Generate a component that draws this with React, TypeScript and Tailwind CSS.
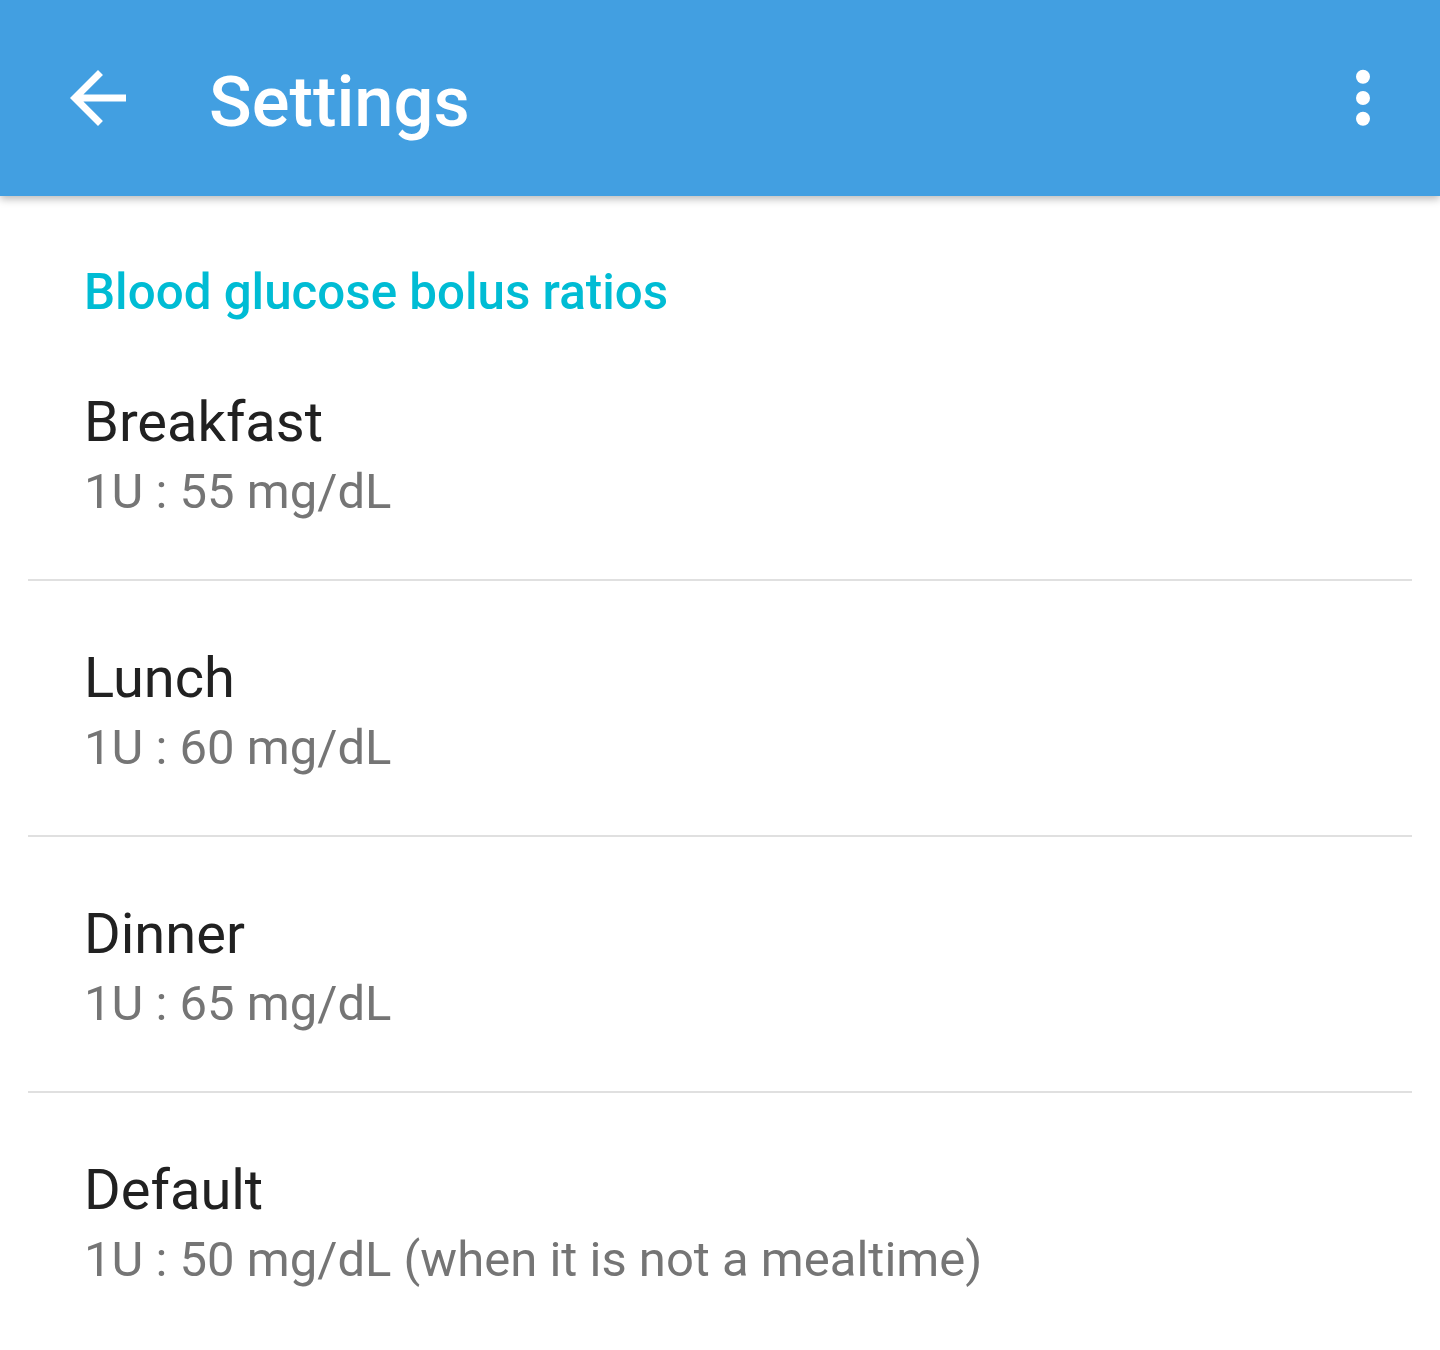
import React from "react";

const items = [
  { title: "Breakfast", sub: "1U : 55 mg/dL" },
  { title: "Lunch", sub: "1U : 60 mg/dL" },
  { title: "Dinner", sub: "1U : 65 mg/dL" },
  { title: "Default", sub: "1U : 50 mg/dL (when it is not a mealtime)" },
];

export default function App() {
  return (
    <div
      className="w-[1440px] h-[1350px] bg-white overflow-hidden"
      style={{ fontFamily: "Roboto, 'Noto Sans', sans-serif" }}
    >
      <header className="relative z-10 flex h-[196px] items-start bg-[#429FE1] shadow-[0_3px_8px_rgba(0,0,0,0.28)]">
        <svg
          className="ml-[56px] mt-[56px] shrink-0"
          width="84"
          height="84"
          viewBox="0 0 24 24"
          fill="white"
        >
          <path d="M20 11H7.83l5.59-5.59L12 4l-8 8 8 8 1.41-1.41L7.83 13H20v-2z" />
        </svg>
        <div className="ml-[69px] pt-[67px] text-[70.5px] leading-[70px] font-medium text-white">
          Settings
        </div>
        <div className="flex-1" />
        <svg
          className="mr-[67px] mt-[68px] shrink-0"
          width="20"
          height="60"
          viewBox="0 0 20 60"
          fill="white"
        >
          <circle cx="10" cy="8.7" r="7" />
          <circle cx="10" cy="30" r="7" />
          <circle cx="10" cy="50.7" r="7" />
        </svg>
      </header>

      <div className="pt-[68px] pb-[5px] pl-[84px]">
        <div className="text-[49.3px] leading-[56px] font-medium text-[#00BCD4]">
          Blood glucose bolus ratios
        </div>
      </div>

      <div className="flex flex-col">
        {items.map((it, i) => (
          <div
            key={it.title}
            className={
              i < items.length - 1
                ? "mx-[28px] border-b-2 border-[#E0E0E0] pl-[56px] pt-[65px] pb-[59px]"
                : "mx-[28px] pl-[56px] pt-[65px] pb-[59px]"
            }
          >
            <div className="text-[56px] leading-[64px] text-[#212121]">{it.title}</div>
            <div className="mt-[10px] text-[49px] leading-[56px] text-[#757575]">{it.sub}</div>
          </div>
        ))}
      </div>
    </div>
  );
}
